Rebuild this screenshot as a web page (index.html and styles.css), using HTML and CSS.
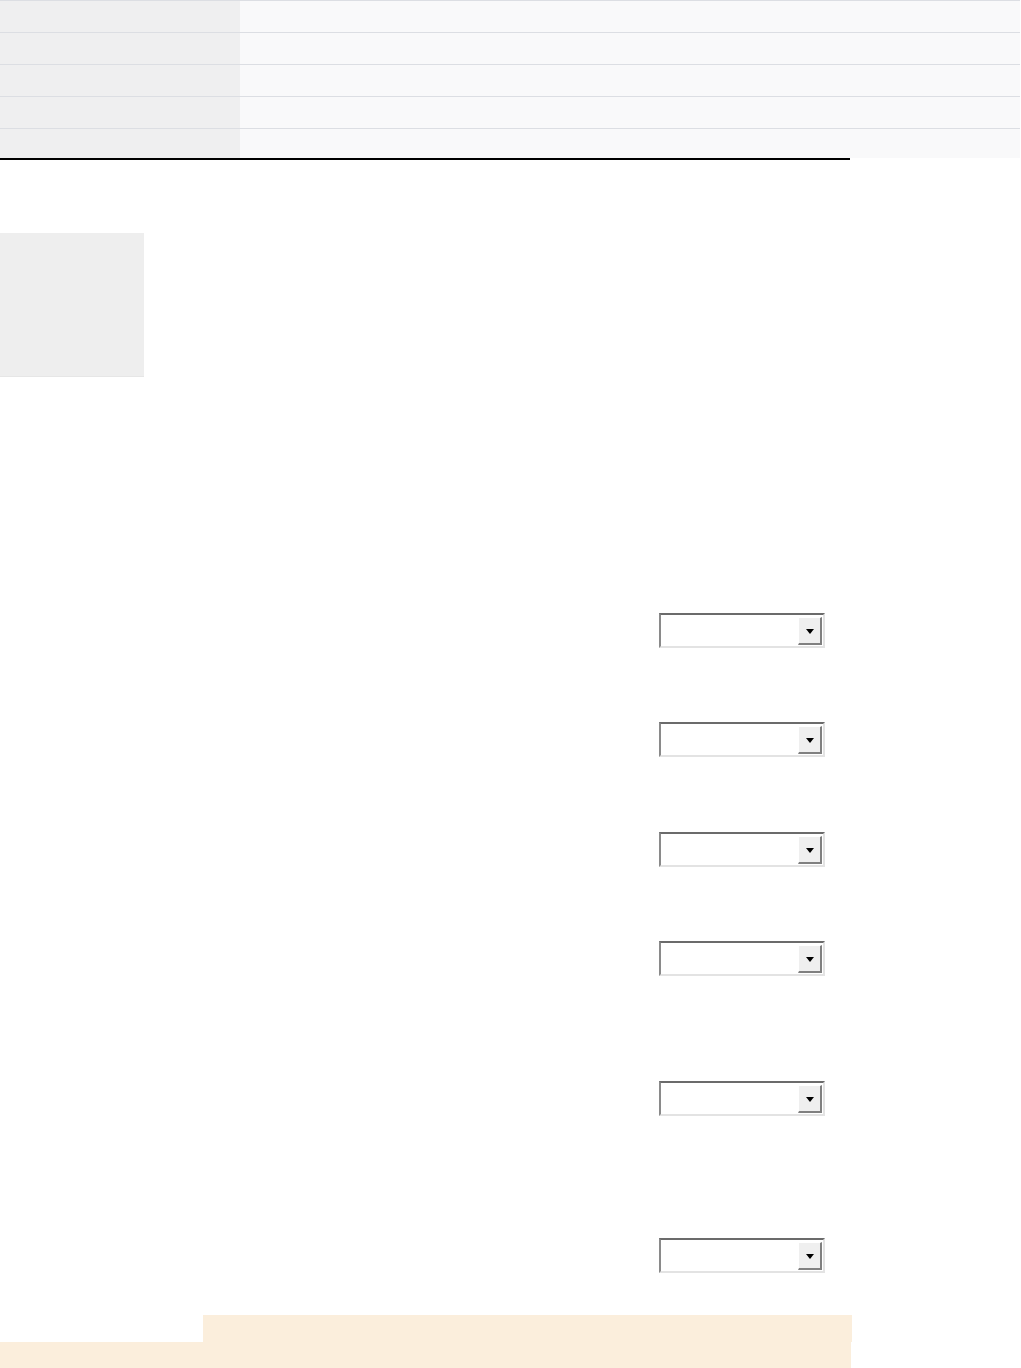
FILE: index.html
```html
<!DOCTYPE html>
<html lang="en">
<head>
  <meta charset="UTF-8" />
  <meta name="viewport" content="width=device-width, initial-scale=1.0"/>
  <title>Product Options</title>
  <link rel="stylesheet" href="styles.css">
</head>
<body>
  <table class="spec">
    <tr><th></th><td></td></tr>
    <tr><th></th><td></td></tr>
    <tr><th></th><td></td></tr>
    <tr><th></th><td></td></tr>
    <tr><th></th><td></td></tr>
  </table>
  <hr class="rule">

  <div class="thumb"></div>

  <div class="options">
    <div class="opt-row r1"><div class="dropdown"><span class="dropdown-btn"><i class="arrow"></i></span></div></div>
    <div class="opt-row r2"><div class="dropdown"><span class="dropdown-btn"><i class="arrow"></i></span></div></div>
    <div class="opt-row r3"><div class="dropdown"><span class="dropdown-btn"><i class="arrow"></i></span></div></div>
    <div class="opt-row r4"><div class="dropdown"><span class="dropdown-btn"><i class="arrow"></i></span></div></div>
    <div class="opt-row r5"><div class="dropdown"><span class="dropdown-btn"><i class="arrow"></i></span></div></div>
    <div class="opt-row r6"><div class="dropdown"><span class="dropdown-btn"><i class="arrow"></i></span></div></div>
  </div>

  <footer class="foot">
    <div class="foot-tab"></div>
    <div class="foot-bar"></div>
  </footer>
</body>
</html>
```

FILE: styles.css
```css
body { font-family: "Liberation Sans", Arial, sans-serif; margin: 0; padding: 0; background: #fff; color: #333; }

.spec { width: 1020px; border-collapse: collapse; border-top: 1px solid #dcdee3; }
.spec th, .spec td { height: 31px; padding: 0; border-bottom: 1px solid #dcdee3; }
.spec tr:last-child th, .spec tr:last-child td { height: 29px; border-bottom: none; }
.spec th { width: 240px; background: #efeff0; }
.spec td { background: #f9f9fa; }

.rule { width: 850px; height: 2px; margin: 0; border: none; background: #000; }

.thumb { width: 144px; height: 143px; margin-top: 73px; background: #eeeeee; border-bottom: 1px solid #e6e6e6; }

.options { width: 850px; padding-top: 236px; }
.opt-row { display: flex; justify-content: flex-end; padding-right: 25px; }
.r2 { margin-top: 74px; }
.r3 { margin-top: 75px; }
.r4 { margin-top: 74px; }
.r5 { margin-top: 105px; }
.r6 { margin-top: 122px; }

.dropdown {
  width: 162px; height: 31px; position: relative; background: #fff;
  border-style: solid; border-width: 2px;
  border-color: #6b6b6b #e3e3e3 #e3e3e3 #8a8a8a;
}
.dropdown-btn {
  position: absolute; top: 2px; right: 1px; width: 21px; height: 25px;
  background: #efefef; border-style: solid; border-width: 1px 2px 2px 1px;
  border-color: #fff #808080 #808080 #fff;
  display: flex; align-items: center; justify-content: center;
}
.arrow { width: 0; height: 0; border-left: 4px solid transparent; border-right: 4px solid transparent; border-top: 5px solid #000; margin-top: 1px; }

.foot { width: 852px; margin-top: 42px; }
.foot-tab { margin-left: 203px; height: 27px; background: #fbeedc; }
.foot-bar { width: 851px; height: 26px; background: #fbeedc; }
```
